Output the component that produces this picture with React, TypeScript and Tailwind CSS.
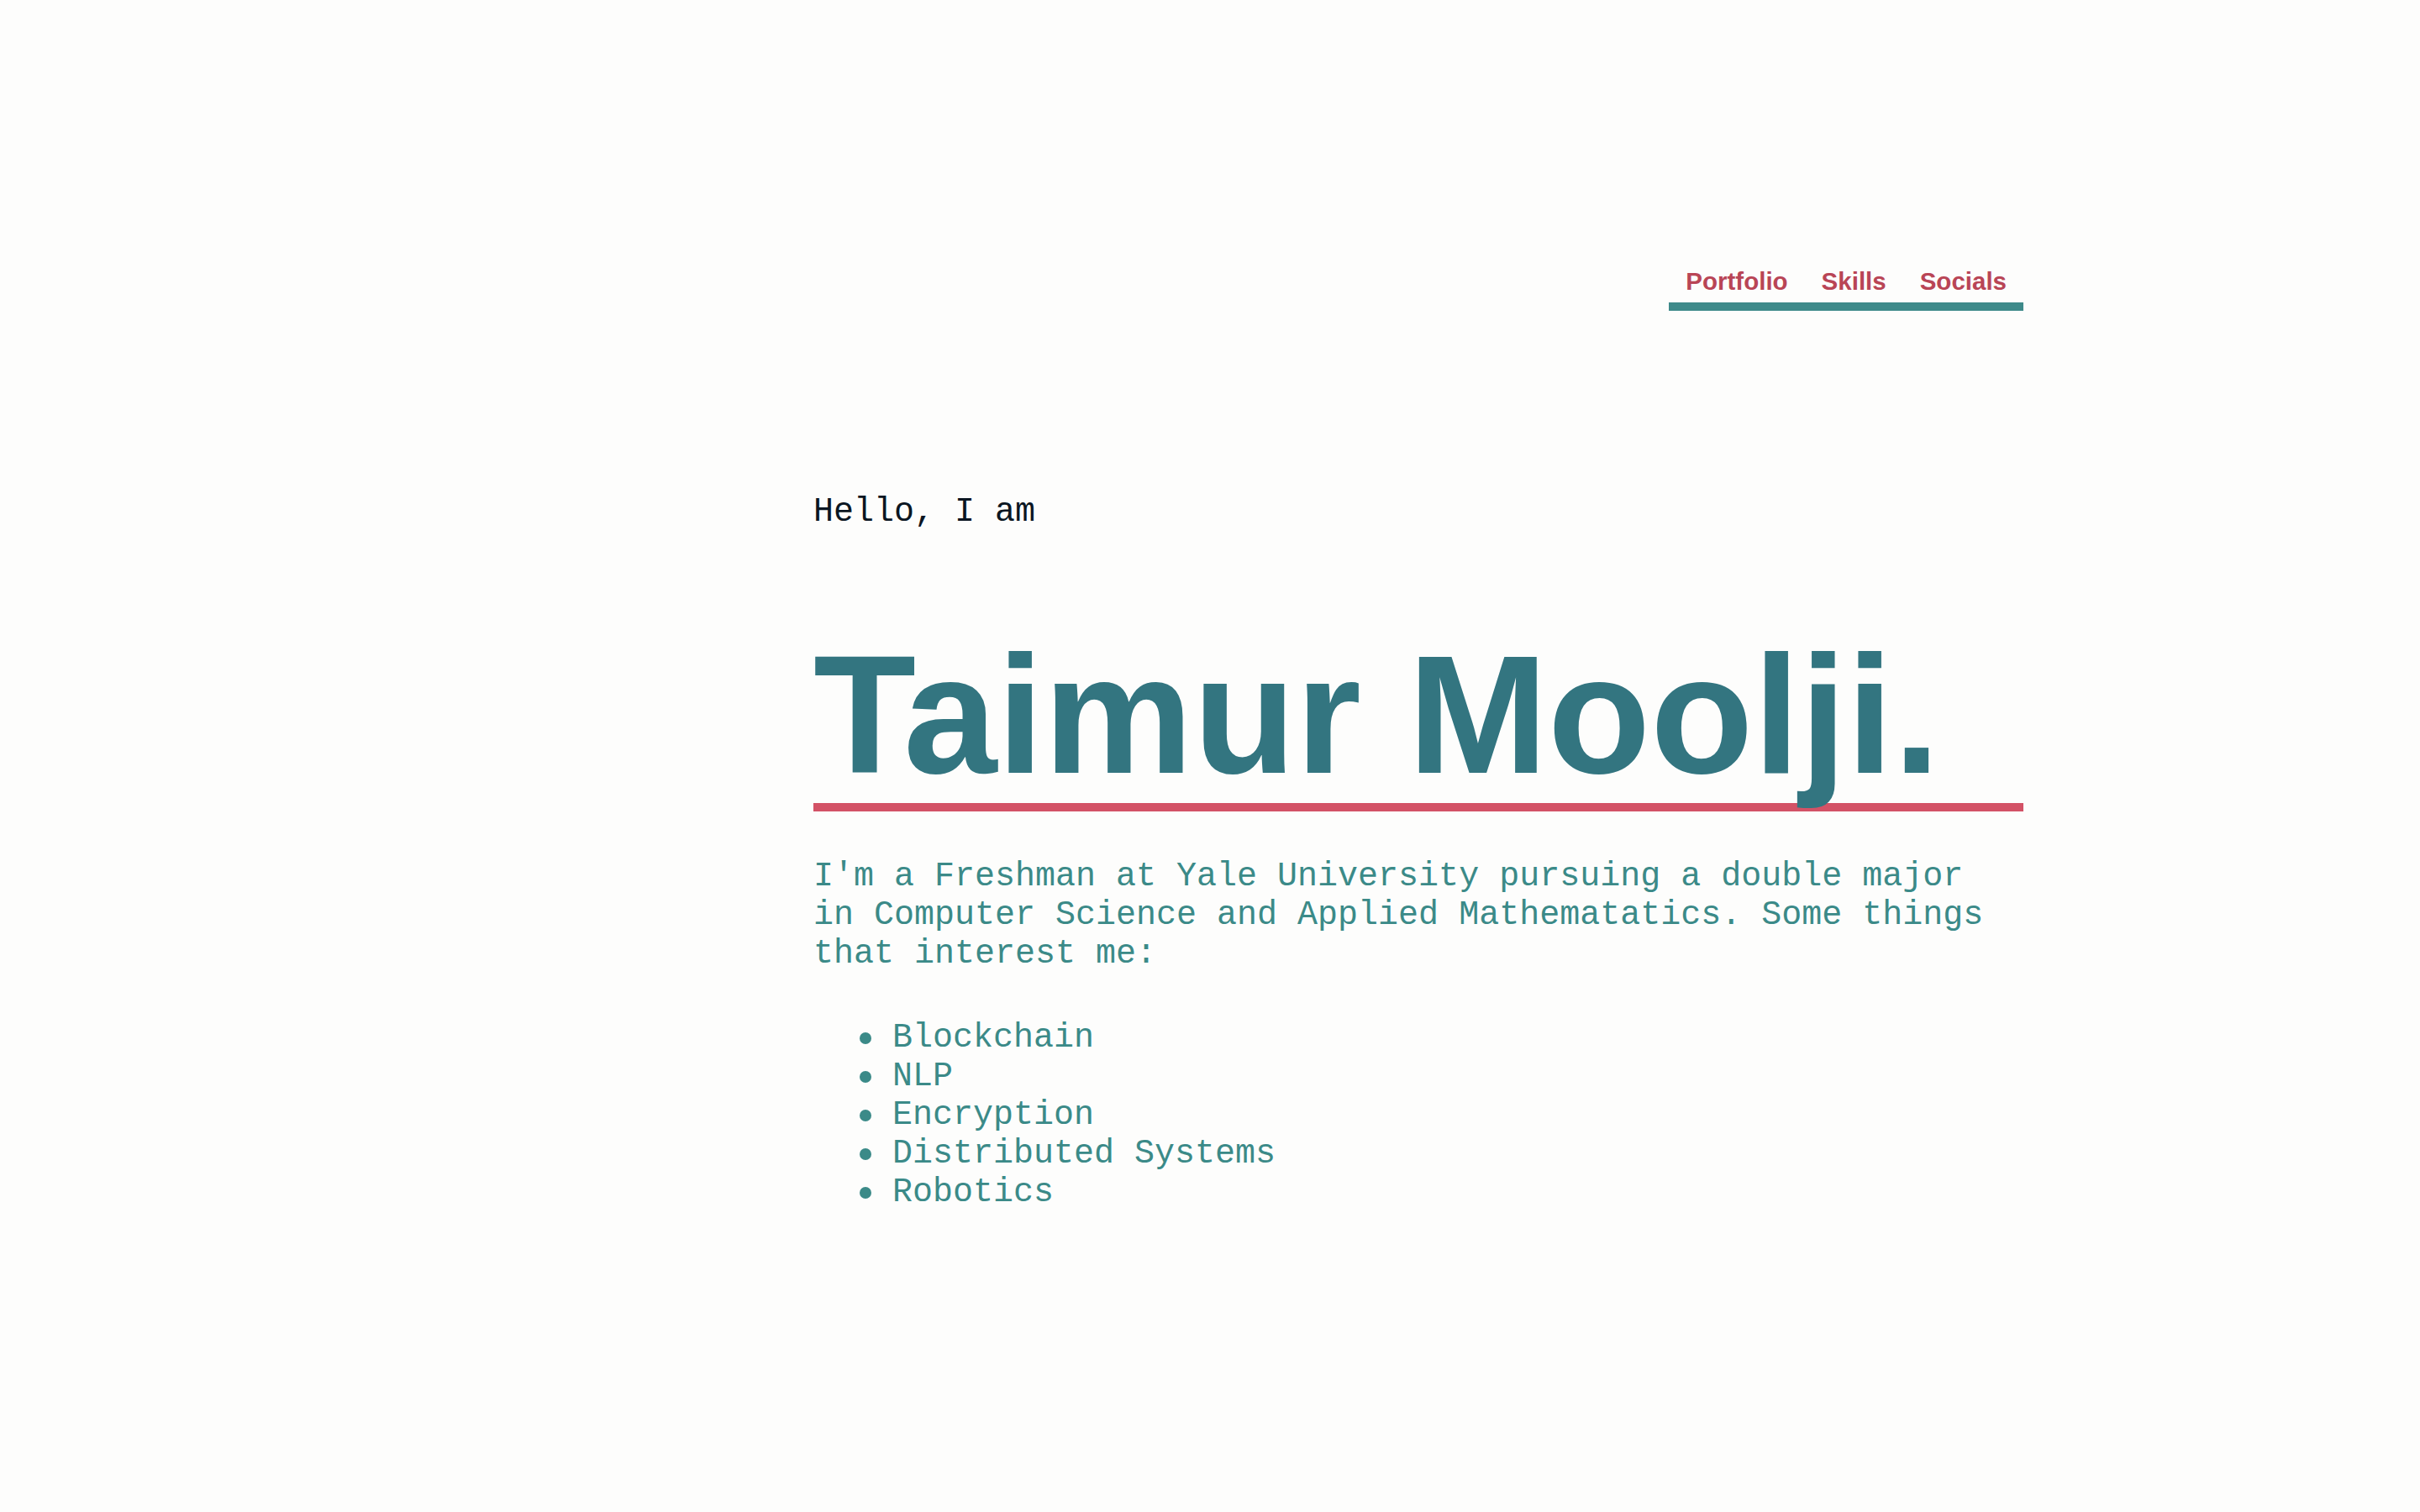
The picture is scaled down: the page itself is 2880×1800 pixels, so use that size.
import React from "react"

const mono = "font-['Liberation_Mono','Courier_New',monospace]"
const sans = "font-['Liberation_Sans',Arial,Helvetica,sans-serif]"

const links = ["Portfolio", "Skills", "Socials"]
const interests = ["Blockchain", "NLP", "Encryption", "Distributed Systems", "Robotics"]

export default function App() {
  return (
    <div className="min-h-screen w-full bg-[#fdfdfc] pl-[968px] pr-[472px] pb-[200px]">
      {/* Top nav */}
      <div className="flex justify-end pt-[317px]">
        <nav className="flex border-b-[10px] border-[#3e8a8a]">
          {links.map((l) => (
            <a
              key={l}
              href="#"
              className={`${sans} px-[20px] pb-[7px] text-[29.5px] leading-[36px] font-bold text-[#b94556]`}
            >
              {l}
            </a>
          ))}
        </nav>
      </div>

      {/* Intro */}
      <p className={`${mono} mt-[217px] text-[40px] leading-[46px] text-[#0b1622]`}>Hello, I am</p>

      <h1
        className={`${sans} mt-[113px] border-b-[10px] border-[#d35266] text-[200px] leading-[210px] font-bold text-[#337580] whitespace-nowrap`}
      >
        Taimur Moolji.
      </h1>

      <p className={`${mono} mt-[55px] text-[40px] leading-[46px] text-[#3b8a88]`}>
        I'm a Freshman at Yale University pursuing a double major in Computer Science and Applied
        Mathematatics. Some things that interest me:
      </p>

      <ul className={`${mono} mt-[54px] pl-[94px] text-[40px] leading-[46px] text-[#3b8a88]`}>
        {interests.map((i) => (
          <li key={i} className="relative">
            <span className="absolute left-[-39px] top-[16px] h-[14px] w-[14px] rounded-full bg-[#3b8a88]" />
            {i}
          </li>
        ))}
      </ul>
    </div>
  )
}
